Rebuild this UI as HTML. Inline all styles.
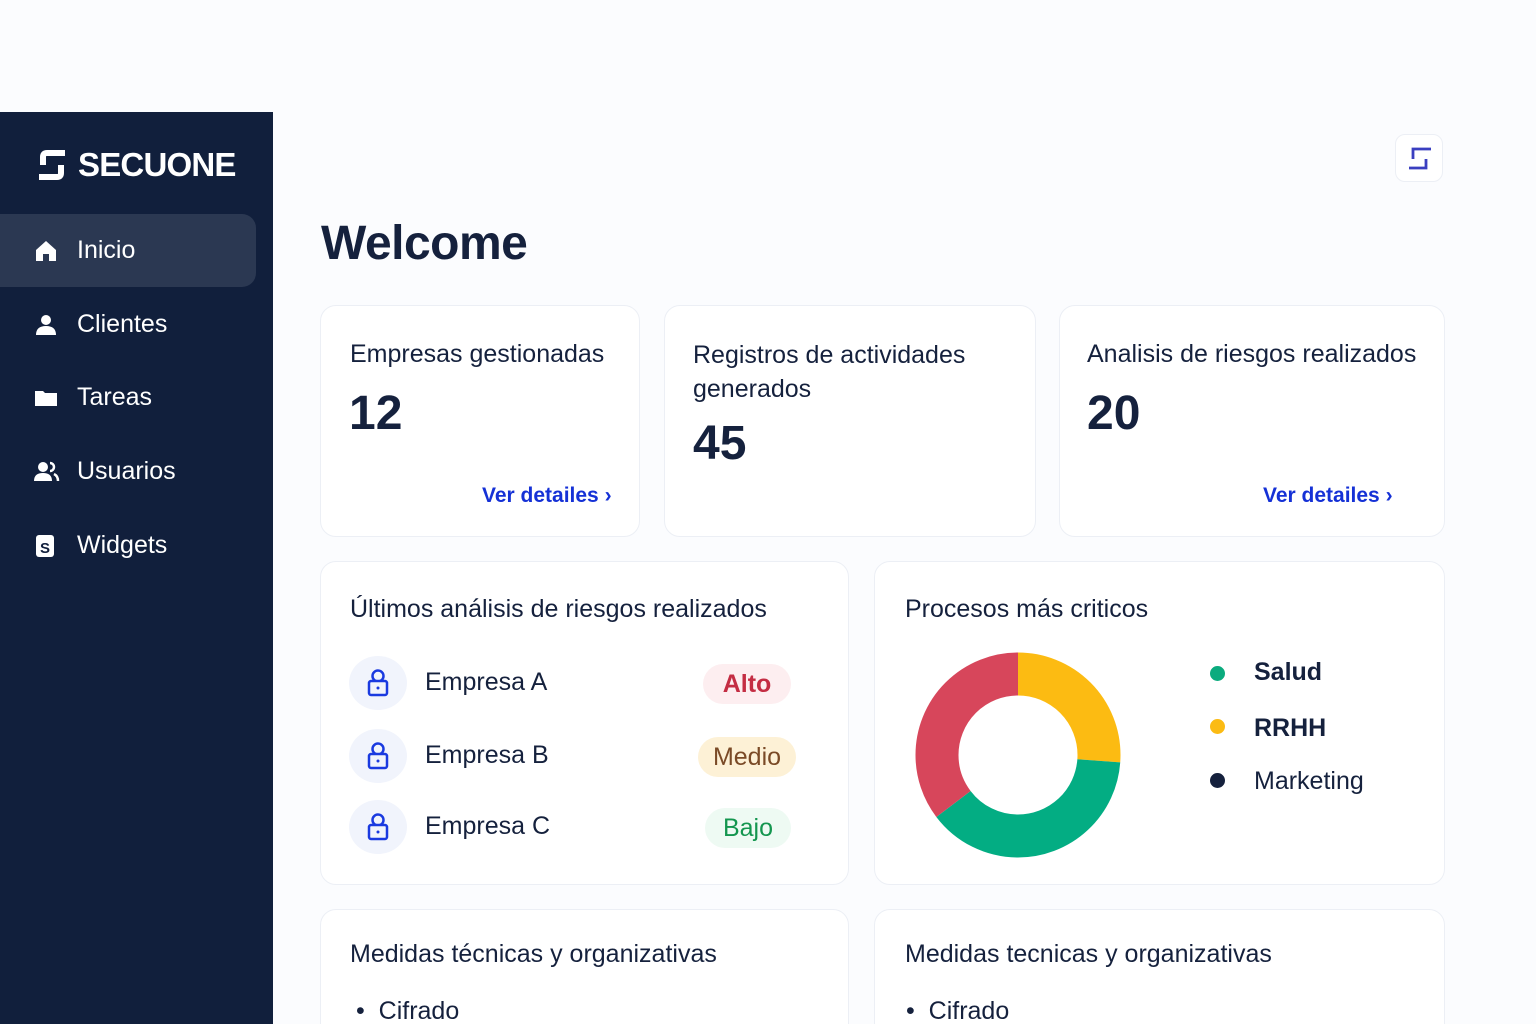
<!DOCTYPE html>
<html><head><meta charset="utf-8"><style>
*{margin:0;padding:0;box-sizing:border-box}
html,body{width:1536px;height:1024px;overflow:hidden}
body{background:#fbfcfe;font-family:"Liberation Sans",sans-serif;color:#15213d;position:relative}
.sb{position:absolute;left:0;top:112px;width:273px;height:912px;background:#111f3c}
.logo{position:absolute;left:38px;top:34px;display:flex;align-items:center;color:#fff;font-weight:bold;font-size:33px;letter-spacing:-0.8px}
.nav{position:absolute;left:0;width:256px;height:73px;display:flex;align-items:center;color:#fff;font-size:25px}
.nav.act{background:#2b3852;border-radius:0 14px 14px 0}
.nav svg{position:absolute;left:34px}
.nav span{position:absolute;left:77px}
.card{position:absolute;background:#fff;border:1px solid #eceff5;border-radius:16px;overflow:hidden}
.ct{position:absolute;font-size:25px;color:#15213d;white-space:nowrap}
.num{position:absolute;font-size:48px;font-weight:bold;color:#15213d}
.link{position:absolute;font-size:21px;font-weight:bold;color:#1531d6}
.row{position:absolute;left:28px;height:56px;width:450px}
.ic{position:absolute;left:0;top:0;width:58px;height:54px;border-radius:50%;background:#f1f4fc}
.ic svg{position:absolute;left:18px;top:12px}
.rn{position:absolute;left:76px;top:12px;font-size:25px}
.pill{position:absolute;top:8px;height:40px;border-radius:20px;font-size:25px;display:flex;align-items:center;justify-content:center}
.dot{position:absolute;width:15px;height:15px;border-radius:50%}
.lg{position:absolute;font-size:25px}
</style></head><body>
<div class="sb">
 <div class="logo"><svg width="28" height="34" viewBox="0 0 28 34"><path d="M27 5H9Q5 5 5 9V17M1 29H19Q23 29 23 25V17" stroke="#fff" stroke-width="6" fill="none"/></svg><span style="margin-left:12px">SECUONE</span></div>
 <div class="nav act" style="top:102px"><svg width="24" height="24" viewBox="0 0 24 24"><path d="M12 2L2 11V22H9V15H15V22H22V11Z" fill="#fff"/></svg><span>Inicio</span></div>
 <div class="nav" style="top:176px"><svg width="24" height="24" viewBox="0 0 24 24"><circle cx="12" cy="7" r="5" fill="#fff"/><path d="M2 22Q2 13 12 13Q22 13 22 22Z" fill="#fff"/></svg><span>Clientes</span></div>
 <div class="nav" style="top:249px"><svg width="24" height="24" viewBox="0 0 24 24"><path d="M1 5H9L11 7H23V20H1Z" fill="#fff"/></svg><span>Tareas</span></div>
 <div class="nav" style="top:323px"><svg width="26" height="24" viewBox="0 0 26 24"><circle cx="9" cy="7" r="5" fill="#fff"/><path d="M0 21Q0 13 9 13Q18 13 18 21Z" fill="#fff"/><path d="M16 3A4 4 0 0 1 16 11M20 14Q24 16 24 21" stroke="#fff" stroke-width="2.5" fill="none"/></svg><span>Usuarios</span></div>
 <div class="nav" style="top:397px"><svg width="22" height="24" viewBox="0 0 22 24"><rect x="2" y="1" width="18" height="22" rx="3" fill="#fff"/><text x="6" y="19" font-size="15" font-weight="bold" fill="#111f3c" font-family="Liberation Sans">S</text></svg><span>Widgets</span></div>
</div>
<div style="position:absolute;left:1395px;top:134px;width:48px;height:48px;border:1px solid #eceff5;border-radius:10px;background:#fff"><svg width="48" height="48" viewBox="0 0 48 48"><path d="M35 14H17V24M13 33H30V24" stroke="#3a3fc0" stroke-width="2.8" fill="none"/></svg></div>
<div style="position:absolute;left:321px;top:216px;font-size:48px;font-weight:bold;color:#15213d;letter-spacing:-0.5px">Welcome</div>

<div class="card" style="left:320px;top:305px;width:320px;height:232px">
 <div class="ct" style="left:29px;top:34px">Empresas gestionadas</div>
 <div class="num" style="left:28px;top:80px">12</div>
 <div class="link" style="left:161px;top:178px">Ver detailes ›</div>
</div>
<div class="card" style="left:664px;top:305px;width:372px;height:232px">
 <div class="ct" style="left:28px;top:32px;line-height:34px">Registros de actividades<br>generados</div>
 <div class="num" style="left:28px;top:110px">45</div>
</div>
<div class="card" style="left:1059px;top:305px;width:386px;height:232px">
 <div class="ct" style="left:27px;top:34px">Analisis de riesgos realizados</div>
 <div class="num" style="left:27px;top:80px">20</div>
 <div class="link" style="left:203px;top:178px">Ver detailes ›</div>
</div>

<div class="card" style="left:320px;top:561px;width:529px;height:324px">
 <div class="ct" style="left:29px;top:33px">Últimos análisis de riesgos realizados</div>
 <div class="row" style="top:94px"><div class="ic"><svg width="22" height="30" viewBox="0 0 22 30"><circle cx="11" cy="8" r="5.5" stroke="#1a3ae0" stroke-width="2.5" fill="none"/><rect x="2" y="13" width="18" height="14" rx="2" stroke="#1a3ae0" stroke-width="2.5" fill="#f1f4fc"/><circle cx="11" cy="20" r="1.5" fill="#1a3ae0"/></svg></div><div class="rn">Empresa A</div><div class="pill" style="left:354px;width:88px;background:#fdeef0;color:#c42d43;font-weight:bold">Alto</div></div>
 <div class="row" style="top:167px"><div class="ic"><svg width="22" height="30" viewBox="0 0 22 30"><circle cx="11" cy="8" r="5.5" stroke="#1a3ae0" stroke-width="2.5" fill="none"/><rect x="2" y="13" width="18" height="14" rx="2" stroke="#1a3ae0" stroke-width="2.5" fill="#f1f4fc"/><circle cx="11" cy="20" r="1.5" fill="#1a3ae0"/></svg></div><div class="rn">Empresa B</div><div class="pill" style="left:349px;width:98px;background:#fdf1d6;color:#7a4a26">Medio</div></div>
 <div class="row" style="top:238px"><div class="ic"><svg width="22" height="30" viewBox="0 0 22 30"><circle cx="11" cy="8" r="5.5" stroke="#1a3ae0" stroke-width="2.5" fill="none"/><rect x="2" y="13" width="18" height="14" rx="2" stroke="#1a3ae0" stroke-width="2.5" fill="#f1f4fc"/><circle cx="11" cy="20" r="1.5" fill="#1a3ae0"/></svg></div><div class="rn">Empresa C</div><div class="pill" style="left:356px;width:86px;background:#eefaf3;color:#14964f">Bajo</div></div>
</div>

<div class="card" style="left:874px;top:561px;width:571px;height:324px">
 <div class="ct" style="left:30px;top:33px">Procesos más criticos</div>
 <svg style="position:absolute;left:40px;top:90px" width="206" height="206" viewBox="0 0 206 206"><g transform="rotate(-90 103 103)">
  <circle cx="103" cy="103" r="81" fill="none" stroke="#fcbb12" stroke-width="43" stroke-dasharray="133 376" stroke-dashoffset="0"/>
  <circle cx="103" cy="103" r="81" fill="none" stroke="#03ad83" stroke-width="43" stroke-dasharray="196 313" stroke-dashoffset="-133"/>
  <circle cx="103" cy="103" r="81" fill="none" stroke="#d7465b" stroke-width="43" stroke-dasharray="180 329" stroke-dashoffset="-329"/>
 </g></svg>
 <div class="dot" style="left:335px;top:104px;background:#0bab7e"></div><div class="lg" style="left:379px;top:96px;font-weight:bold">Salud</div>
 <div class="dot" style="left:335px;top:157px;background:#fbbb14"></div><div class="lg" style="left:379px;top:152px;font-weight:bold">RRHH</div>
 <div class="dot" style="left:335px;top:211px;background:#15213d"></div><div class="lg" style="left:379px;top:205px">Marketing</div>
</div>

<div class="card" style="left:320px;top:909px;width:529px;height:140px">
 <div class="ct" style="left:29px;top:30px">Medidas técnicas y organizativas</div>
 <div class="ct" style="left:35px;top:87px">•&nbsp; Cifrado</div>
</div>
<div class="card" style="left:874px;top:909px;width:571px;height:140px">
 <div class="ct" style="left:30px;top:30px">Medidas tecnicas y organizativas</div>
 <div class="ct" style="left:31px;top:87px">•&nbsp; Cifrado</div>
</div>
</body></html>
